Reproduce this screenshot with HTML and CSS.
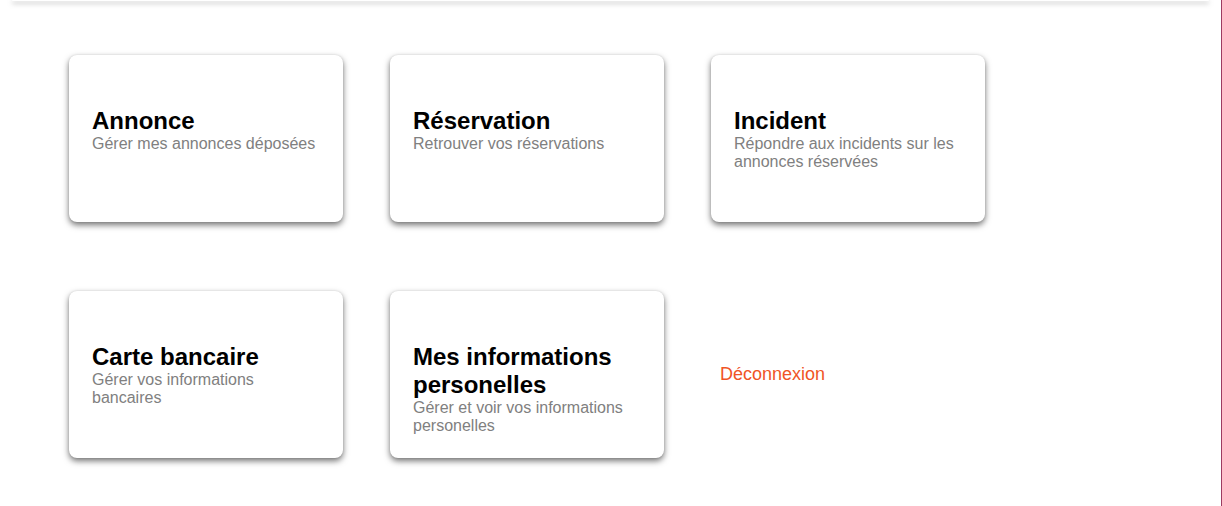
FILE: index.html
```html
<!DOCTYPE html>
<html lang="fr">
<head>
<meta charset="utf-8">
<title>Mon compte</title>
<link rel="stylesheet" href="styles.css">
</head>
<body>
<div class="page">
  <header class="topbar"></header>
  <main class="grid">
    <a class="card" href="#">
      <h2 class="card-title">Annonce</h2>
      <p class="card-text">Gérer mes annonces déposées</p>
    </a>
    <a class="card" href="#">
      <h2 class="card-title">Réservation</h2>
      <p class="card-text">Retrouver vos réservations</p>
    </a>
    <a class="card" href="#">
      <h2 class="card-title">Incident</h2>
      <p class="card-text">Répondre aux incidents sur les annonces réservées</p>
    </a>
    <a class="card" href="#">
      <h2 class="card-title">Carte bancaire</h2>
      <p class="card-text">Gérer vos informations bancaires</p>
    </a>
    <a class="card" href="#">
      <h2 class="card-title">Mes informations personelles</h2>
      <p class="card-text">Gérer et voir vos informations personelles</p>
    </a>
    <div class="logout-cell">
      <a class="logout" href="#">Déconnexion</a>
    </div>
  </main>
</div>
</body>
</html>
```

FILE: styles.css
```css
html, body {
  margin: 0;
  padding: 0;
  background: #ffffff;
}

body {
  font-family: "Liberation Sans", Arial, sans-serif;
  overflow: hidden;
}

.page {
  width: 1222px;
  height: 506px;
  box-sizing: border-box;
  border-right: 1px solid #9d3b61;
}

.topbar {
  height: 1px;
  margin: 0 12px 0 12px;
  background: #ffffff;
  border-radius: 0 0 8px 8px;
  box-shadow: 0 2px 5px rgba(0, 0, 0, 0.55);
}

.grid {
  display: grid;
  grid-template-columns: repeat(3, 274px);
  grid-auto-rows: 167px;
  column-gap: 47px;
  row-gap: 69px;
  padding: 54px 0 0 69px;
}

.card {
  display: block;
  box-sizing: border-box;
  height: 167px;
  padding: 52px 23px 0 23px;
  background: #ffffff;
  border-radius: 8px;
  box-shadow: 0 3px 6px rgba(0, 0, 0, 0.55), 0 0 2px rgba(0, 0, 0, 0.1);
  text-decoration: none;
}

.card-title {
  margin: 0;
  font-size: 24px;
  font-weight: bold;
  line-height: 28px;
  color: #000000;
}

.card-text {
  margin: 0;
  font-size: 16px;
  line-height: 18px;
  color: #808080;
}

.logout-cell {
  display: flex;
  align-items: center;
  padding-left: 9px;
}

.logout {
  font-size: 18px;
  color: #f05426;
  text-decoration: none;
}
```
